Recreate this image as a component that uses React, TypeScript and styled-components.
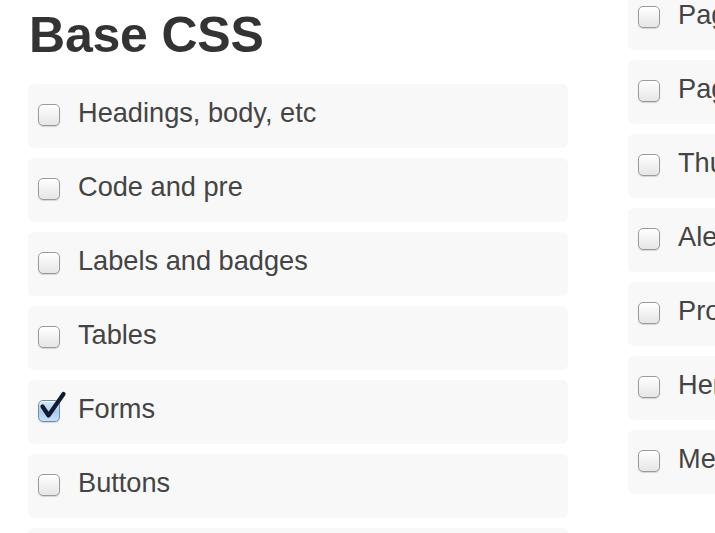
import React from "react";
import styled, { createGlobalStyle } from "styled-components";

const Global = createGlobalStyle`
  html, body { margin: 0; padding: 0; background: #fff; overflow: hidden; }
  body { font-family: "Liberation Sans", Arial, Helvetica, sans-serif; color: #555; }
`;

const Page = styled.div`
  display: grid;
  grid-template-columns: 540px 540px;
  column-gap: 60px;
  padding-left: 28px;
  width: 1200px;
  height: 533px;
  overflow: hidden;
`;

const Column = styled.section<{ $offset?: number }>`
  display: flex;
  flex-direction: column;
  margin-top: ${(p) => p.$offset ?? 0}px;
`;

const Heading = styled.h1`
  margin: 6px 0 20px 1px;
  font-size: 50px;
  line-height: 58px;
  font-weight: 700;
  color: #333;
  letter-spacing: -0.2px;
`;

const List = styled.ul`
  list-style: none;
  margin: 0;
  padding: 0;
  display: flex;
  flex-direction: column;
  gap: 10px;
`;

const Row = styled.li`
  height: 64px;
  box-sizing: border-box;
  background: #f8f8f8;
  border-radius: 6px;
  display: flex;
  align-items: center;
  padding-left: 10px;
  gap: 18px;
`;

const Box = styled.span<{ $checked?: boolean }>`
  position: relative;
  width: 22px;
  height: 22px;
  flex: none;
  box-sizing: border-box;
  border-radius: 5px;
  border: 1px solid ${(p) => (p.$checked ? "#6d8fb3" : "#9a9a9a")};
  background: ${(p) =>
    p.$checked
      ? "linear-gradient(#d6e8fb, #a9cdf2 55%, #c7e0f8)"
      : "linear-gradient(#ffffff, #f2f2f2 50%, #e6e6e6)"};
  box-shadow: 0 1px 1px rgba(0, 0, 0, 0.15), inset 0 1px 0 #fff;
  margin-top: -2px;
`;

const Check = styled.svg`
  position: absolute;
  left: 1px;
  top: -10px;
  width: 26px;
  height: 28px;
  overflow: visible;
`;

const Label = styled.span`
  font-size: 27.2px;
  color: #444;
  margin-top: -7px;
  white-space: nowrap;
`;

const baseCss = [
  { label: "Headings, body, etc" },
  { label: "Code and pre" },
  { label: "Labels and badges" },
  { label: "Tables" },
  { label: "Forms", checked: true },
  { label: "Buttons" },
  { label: "Icons" },
];

const components = [
  "Pagination",
  "Pager",
  "Thumbnails",
  "Alerts",
  "Progress bars",
  "Hero unit",
  "Media object",
];

function Item({ label, checked }: { label: string; checked?: boolean }) {
  return (
    <Row>
      <Box $checked={checked}>
        {checked && (
          <Check viewBox="0 0 26 28">
            <path
              d="M2.5 15.5 L8.5 24.5 L23.5 3"
              fill="none"
              stroke="#111a2e"
              strokeWidth="4.2"
              strokeLinecap="round"
              strokeLinejoin="round"
            />
          </Check>
        )}
      </Box>
      <Label>{label}</Label>
    </Row>
  );
}

export default function App() {
  return (
    <>
      <Global />
      <Page>
        <Column>
          <Heading>Base CSS</Heading>
          <List>
            {baseCss.map((i) => (
              <Item key={i.label} label={i.label} checked={i.checked} />
            ))}
          </List>
        </Column>
        <Column $offset={-14}>
          <List>
            {components.map((c) => (
              <Item key={c} label={c} />
            ))}
          </List>
        </Column>
      </Page>
    </>
  );
}
